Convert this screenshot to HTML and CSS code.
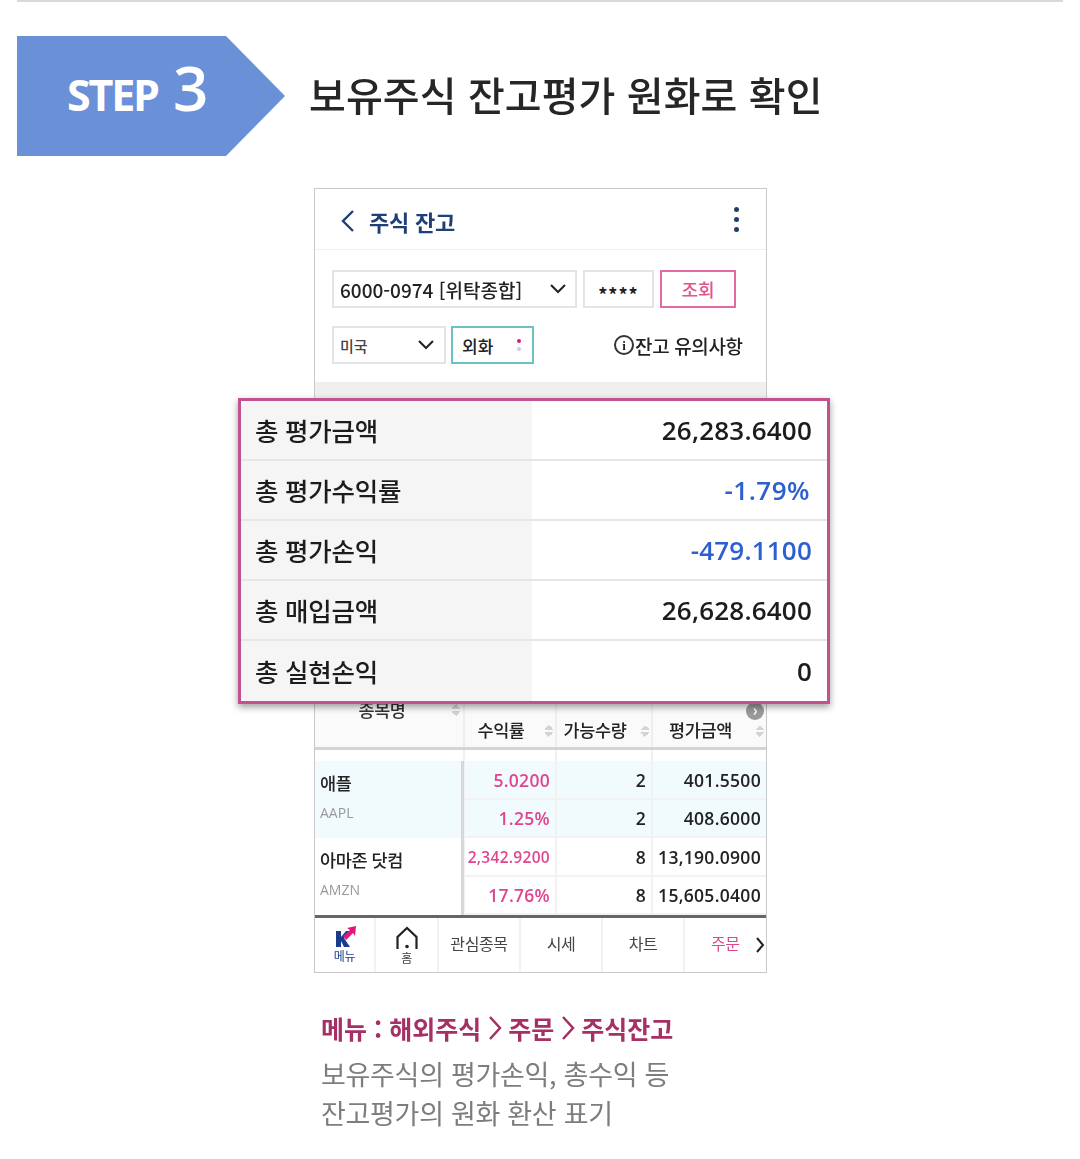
FILE: index.html
```html
<!DOCTYPE html>
<html lang="ko">
<head>
<meta charset="utf-8">
<title>STEP 3</title>
<link rel="stylesheet" href="styles.css">
</head>
<body>
<main class="page">
  <div class="topline"></div>
  <section class="step-row">
    <div class="badge"><span class="step-word">STEP</span><span class="step-num">3</span></div>
    <h1 class="title">보유주식 잔고평가 원화로 확인</h1>
  </section>

  <section class="phone">
    <header class="app-head">
      <svg class="back" width="14" height="24" viewBox="0 0 14 24"><path d="M12 2 2 12l10 10" fill="none" stroke="#1f3f77" stroke-width="2.4"/></svg>
      <span class="app-title">주식 잔고</span>
      <span class="kebab"><i></i><i></i><i></i></span>
    </header>
    <div class="controls">
      <div class="ctrl-row">
        <div class="field account">6000-0974 [위탁종합]
          <svg class="chev" width="16" height="10" viewBox="0 0 16 10"><path d="m1 1 7 7 7-7" fill="none" stroke="#222" stroke-width="2"/></svg>
        </div>
        <div class="field pw">****</div>
        <div class="field query">조회</div>
      </div>
      <div class="ctrl-row second">
        <div class="field nation">미국
          <svg class="chev" width="16" height="10" viewBox="0 0 16 10"><path d="m1 1 7 7 7-7" fill="none" stroke="#222" stroke-width="2"/></svg>
        </div>
        <div class="field currency">외화<span class="dots"><i></i><i></i></span></div>
        <div class="notice"><span class="info">i</span>잔고 유의사항</div>
      </div>
    </div>
    <div class="gray-band"></div>
    <div class="table-head">
      <div class="th th-name">종목명<span class="sort"></span></div>
      <div class="th">수익률<span class="sort"></span></div>
      <div class="th">가능수량<span class="sort"></span></div>
      <div class="th">평가금액<span class="sort"></span></div>
      <span class="more">›</span>
    </div>
    <div class="spacer-row"><i></i><i></i><i></i><i></i></div>
    <div class="stock tinted">
      <div class="name"><b>애플</b><small>AAPL</small></div>
      <div class="num up">5.0200</div><div class="num">2</div><div class="num">401.5500</div>
      <div class="num up">1.25%</div><div class="num">2</div><div class="num">408.6000</div>
    </div>
    <div class="stock">
      <div class="name"><b>아마존 닷컴</b><small>AMZN</small></div>
      <div class="num up tight">2,342.9200</div><div class="num">8</div><div class="num">13,190.0900</div>
      <div class="num up">17.76%</div><div class="num">8</div><div class="num">15,605.0400</div>
    </div>
    <nav class="tabs">
      <div class="tab t-menu">
        <svg width="24" height="24" viewBox="0 0 24 24"><path d="M3 6h5v6l5-6h3l-5 7 6 9h-6l-3-6v6H3z" fill="#1b3c8c"/><path d="m10 11 7-6-3-2 9-2-1 10-2-3-7 7z" fill="#e0177d"/></svg>
        <span>메뉴</span>
      </div>
      <div class="tab t-home">
        <svg width="24" height="24" viewBox="0 0 24 24"><path d="M2.500 23V11L12 2l9.500 9v12" fill="none" stroke="#222" stroke-width="2.200"/><circle cx="12" cy="20.500" r="1.800" fill="#222"/></svg>
        <span>홈</span>
      </div>
      <div class="tab">관심종목</div>
      <div class="tab">시세</div>
      <div class="tab">차트</div>
      <div class="tab active">주문
        <svg class="tab-next" width="10" height="16" viewBox="0 0 10 16"><path d="m2 1 6 7-6 7" fill="none" stroke="#222" stroke-width="2"/></svg>
      </div>
    </nav>
  </section>

  <section class="popup">
    <div class="p-row"><div class="p-label">총 평가금액</div><div class="p-val">26,283.6400</div></div>
    <div class="p-row"><div class="p-label">총 평가수익률</div><div class="p-val down pct">-1.79%</div></div>
    <div class="p-row"><div class="p-label">총 평가손익</div><div class="p-val down">-479.1100</div></div>
    <div class="p-row"><div class="p-label">총 매입금액</div><div class="p-val">26,628.6400</div></div>
    <div class="p-row"><div class="p-label">총 실현손익</div><div class="p-val">0</div></div>
  </section>

  <section class="caption">
    <p class="cap-path">메뉴 : 해외주식<svg class="gt" width="14" height="26" viewBox="0 0 14 26"><path d="m2 2 10 11L2 24" fill="none" stroke="#a62f66" stroke-width="2.500"/></svg>주문<svg class="gt" width="14" height="26" viewBox="0 0 14 26"><path d="m2 2 10 11L2 24" fill="none" stroke="#a62f66" stroke-width="2.500"/></svg>주식잔고</p>
    <p class="cap-text">보유주식의 평가손익, 총수익 등<br>잔고평가의 원화 환산 표기</p>
  </section>
</main>
</body>
</html>
```
FILE: styles.css
```css
* { box-sizing: border-box; }
html, body { margin: 0; padding: 0; background: #fff; }
body { font-family: "Noto Sans CJK KR", "Noto Sans", sans-serif; color: #222; }
.page { position: relative; width: 1080px; height: 1159px; overflow: hidden; filter: blur(.5px); }
.topline { height: 2px; margin: 0 17px; background: #d9d9d9; }

.step-row { display: flex; align-items: center; margin-top: 34px; padding-left: 17px; height: 120px; }
.badge { display: flex; align-items: baseline; width: 268px; height: 120px; padding: 21px 0 0 50px; background: #6a91d7; color: #fff;
  clip-path: polygon(0 0, 209px 0, 100% 50%, 209px 100%, 0 100%); font-family: "Open Sans", sans-serif; }
.step-word { font-size: 43px; line-height: 60px; font-weight: 700; letter-spacing: -2.2px; }
.step-num { font-size: 62px; line-height: 60px; font-weight: 600; margin-left: 15px; }
.title { margin: 0 0 4px 24px; font-size: 40px; line-height: 1.2; font-weight: 500; color: #262626; letter-spacing: .1px; white-space: nowrap; }

.phone { display: flex; flex-direction: column; width: 453px; height: 785px; margin: 32px 0 0 314px; border: 1px solid #c9c9c9; }
.app-head { display: flex; align-items: center; height: 61px; padding: 0 27px 0 26px; border-bottom: 1px solid #f0f0f0; flex: none; }
.back { margin-top: 3px; }
.app-title { margin: 3px 0 0 14px; font-size: 22px; font-weight: 700; color: #1f3f77; letter-spacing: -.2px; }
.kebab { display: flex; flex-direction: column; gap: 5px; margin: 1px 0 0 auto; }
.kebab i { width: 5px; height: 5px; border-radius: 50%; background: #1f3f6b; }

.controls { height: 132px; padding: 20px 0 0 17px; flex: none; }
.ctrl-row { display: flex; gap: 6px; height: 38px; }
.ctrl-row.second { margin-top: 18px; align-items: stretch; }
.field { display: flex; align-items: center; height: 38px; border: 2px solid #e4e4e4; background: #fff; font-size: 19px; font-weight: 500; white-space: nowrap; }
.account { width: 245px; padding-left: 6px; }
.account .chev { margin-left: auto; margin-right: 9px; }
.pw { width: 71px; justify-content: center; padding-top: 9px; font-size: 18px; font-weight: 700; letter-spacing: 1px; }
.query { width: 76px; justify-content: center; border-color: #e36aa2; color: #e0558f; font-size: 18px; }
.nation { width: 114px; padding-left: 6px; font-size: 15px; color: #444; }
.nation .chev { margin-left: auto; margin-right: 10px; }
.currency { position: relative; width: 83px; padding-left: 9px; margin-left: -1px; border-color: #6cc2c2; font-size: 17px; }
.dots { display: flex; flex-direction: column; gap: 4px; margin-left: 24px; }
.dots i { width: 4px; height: 4px; border-radius: 50%; background: #e0177d; }
.dots i + i { background: #ccc; }
.notice { display: flex; align-items: center; margin-left: 74px; font-size: 19px; font-weight: 500; letter-spacing: -.35px; white-space: nowrap; }
.info { display: flex; align-items: center; justify-content: center; width: 20px; height: 20px; margin-right: 1px; border: 2px solid #333; border-radius: 50%; font-size: 13px; line-height: 1; font-family: "Liberation Serif", serif; font-weight: 700; }

.gray-band { height: 320px; background: #efefef; flex: none; }
.table-head { position: relative; display: grid; grid-template-columns: 148px 92px 96px 1fr; height: 48px; background: #fafafa; border-bottom: 3px solid #d4d4d4; flex: none; }
.th { position: relative; display: flex; align-items: center; justify-content: center; padding: 10px 18px 0 0; font-size: 17.5px; font-weight: 500; letter-spacing: -.4px; border-left: 2px solid #eee; }
.th-name { align-items: flex-start; padding: 0 14px 0 0; border-left: 0; line-height: 16px; color: #333; }
.sort { position: absolute; right: 2px; top: 22px; width: 8px; height: 14px; background:
  linear-gradient(135deg, transparent 50%, #d4d4d4 50%) 0 0/4px 6px no-repeat,
  linear-gradient(225deg, transparent 50%, #d4d4d4 50%) 4px 0/4px 6px no-repeat,
  linear-gradient(45deg, transparent 50%, #d4d4d4 50%) 0 8px/4px 6px no-repeat,
  linear-gradient(315deg, transparent 50%, #d4d4d4 50%) 4px 8px/4px 6px no-repeat; }
.th-name .sort { top: 1px; right: 3px; }
.more { position: absolute; right: 2px; top: 0; width: 18px; height: 18px; border-radius: 50%; background: #9a9a9a; color: #fff; font-size: 16px; line-height: 15px; text-align: center; font-weight: 700; }
.spacer-row { display: grid; grid-template-columns: 148px 92px 96px 1fr; height: 11px; flex: none; }
.spacer-row i { border-left: 2px solid #f0f0f0; }
.spacer-row i:first-child { border-left: 0; }
.stock { display: grid; grid-template-columns: 148px 92px 96px 1fr; grid-template-rows: 39px 38px; height: 77px; flex: none; }
.stock.tinted { background: #f1fbfd; }
.name { grid-row: 1 / 3; display: flex; flex-direction: column; padding: 9px 0 0 5px; border-right: 3px solid #d8d8d8; margin-right: -1px; position: relative; }
.name b { font-size: 17.5px; line-height: 26px; font-weight: 500; letter-spacing: -.4px; }
.name small { margin-top: 8px; font-size: 14px; line-height: 18px; color: #999; font-family: "Open Sans", sans-serif; }
.num { display: flex; align-items: center; justify-content: flex-end; padding-right: 5px; font-size: 17.500px; font-weight: 600; letter-spacing: .3px; font-family: "Open Sans", sans-serif; border-left: 2px solid #f2f2f2; border-bottom: 2px solid #f2f2f2; white-space: nowrap; }
.num.up { color: #e0458f; padding-right: 5px; }
.num.tight { font-size: 15.500px; }

.tabs { display: flex; flex: 1; border-top: 3px solid #666; font-size: 16px; color: #444; letter-spacing: -.4px; }
.tab { position: relative; display: flex; align-items: center; justify-content: center; width: 82px; height: 100%; padding-bottom: 4px; border-right: 2px solid #f2f2f2; white-space: nowrap; }
.t-menu { flex-direction: column; width: 61px; padding-bottom: 2px; font-size: 12px; color: #1b3c8c; gap: 0; line-height: 14px; }
.t-home { flex-direction: column; width: 63px; padding-bottom: 0; font-size: 12px; gap: 1px; line-height: 14px; }
.tab.active { flex: 1; border-right: 0; color: #e0458f; justify-content: flex-start; padding-left: 26px; }
.tab-next { position: absolute; right: 1px; top: 19px; }

.popup { position: absolute; left: 238px; top: 398px; width: 592px; height: 306px; border: 3px solid #c2528f; background: #fff; box-shadow: 0 3px 7px rgba(0,0,0,.38); display: flex; flex-direction: column; }
.p-row { display: grid; grid-template-columns: 291px 1fr; height: 60px; border-bottom: 2px solid #e6e6e6; }
.p-row:last-child { border-bottom: 0; flex: 1; }
.p-label { display: flex; align-items: center; padding: 0 0 2px 14px; background: #f5f5f5; font-size: 25.500px; font-weight: 500; letter-spacing: -.25px; color: #1c1c1c; }
.p-val { display: flex; align-items: center; justify-content: flex-end; padding-right: 15px; font-size: 26px; font-weight: 600; letter-spacing: .2px; font-family: "Open Sans", sans-serif; color: #1c1c1c; }
.p-val.down { color: #2e5fd0; }
.p-val.pct { padding-right: 17px; letter-spacing: .5px; }

.caption { margin: 35px 0 0 321px; }
.caption p { margin: 0; white-space: nowrap; }
.cap-path { display: flex; align-items: center; font-size: 25px; line-height: 40px; font-weight: 700; color: #a62f66; }
.gt { margin: 0 6px 0 7px; }
.caption .cap-text { margin-top: 6px; font-size: 27px; line-height: 39px; color: #7d7d7d; letter-spacing: -.3px; }
```
